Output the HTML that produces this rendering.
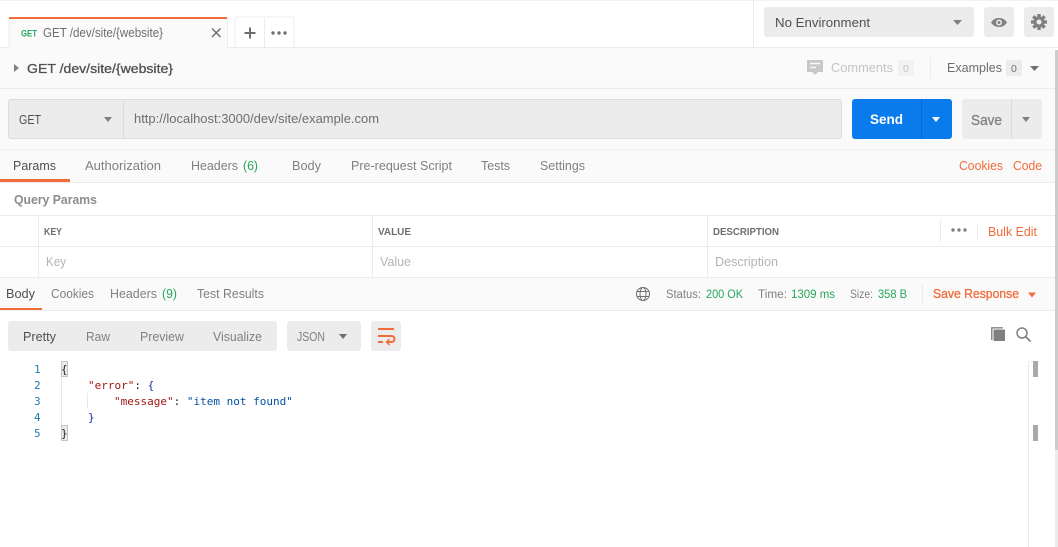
<!DOCTYPE html>
<html><head><meta charset="utf-8">
<style>
html,body{margin:0;padding:0;background:#fff;width:1058px;height:547px;overflow:hidden}
svg{display:block}
text{font-family:"Liberation Sans",sans-serif;font-size:12.5px;fill:#808080}
.m{font-family:"DejaVu Sans Mono","Liberation Mono",monospace;font-size:11px}
.d{fill:#505050}.o{fill:#f26b3a}.g{fill:#26a65b}.l{fill:#b3b3b3}.h{fill:#6e6e6e}
.st{stroke:#505050;stroke-width:.3px}.so{stroke:#f26b3a;stroke-width:.3px}.sh{stroke:#808080;stroke-width:.3px}
</style></head><body>
<svg width="1058" height="547" viewBox="0 0 1058 547" xmlns="http://www.w3.org/2000/svg">
<rect width="1058" height="547" fill="#fff"/>
<rect width="1058" height="1" fill="#f2f2f2"/>
<!-- panels -->
<rect x="0" y="48" width="1055" height="134" fill="#fafafa"/>
<rect x="0" y="47" width="1058" height="1" fill="#ececec"/>
<rect x="0" y="88" width="1055" height="1" fill="#ececec"/>
<rect x="0" y="149" width="1055" height="1" fill="#f0f0f0"/>
<rect x="0" y="182" width="1055" height="1" fill="#ececec"/>
<rect x="0" y="215" width="1055" height="1" fill="#ececec"/>
<rect x="0" y="246" width="1055" height="1" fill="#ececec"/>
<rect x="0" y="277" width="1055" height="1" fill="#ececec"/>
<rect x="0" y="278" width="1055" height="32" fill="#fafafa"/>
<rect x="0" y="310" width="1055" height="1" fill="#ececec"/>
<!-- tab -->
<rect x="9" y="18" width="218" height="30" fill="#fafafa"/>
<rect x="8.500" y="18" width="1" height="29" fill="#ececec"/>
<rect x="227" y="18" width="1" height="29" fill="#ececec"/>
<rect x="9" y="17" width="218" height="2" fill="#f26b3a"/>
<text x="21" y="36.500" style="font-size:9.500px;font-weight:bold" class="g" textLength="16" lengthAdjust="spacingAndGlyphs">GET</text>
<text x="43" y="37" class="h" textLength="120" lengthAdjust="spacingAndGlyphs">GET /dev/site/{website}</text>
<path d="M212 28.500l8.500 8.500M220.500 28.500l-8.500 8.500" stroke="#707070" stroke-width="1.500" fill="none"/>
<path d="M235 47V19a2 2 0 0 1 2-2H292a2 2 0 0 1 2 2V47" fill="#fff" stroke="#ececec"/>
<rect x="264" y="18" width="1" height="29" fill="#ececec"/>
<path d="M250 27.500v11M244.500 33h11" stroke="#6e6e6e" stroke-width="2" fill="none"/>
<circle cx="273" cy="33" r="1.700" fill="#707070"/><circle cx="279" cy="33" r="1.700" fill="#707070"/><circle cx="285" cy="33" r="1.700" fill="#707070"/>
<!-- env -->
<rect x="753" y="0" width="1" height="47" fill="#ececec"/>
<rect x="764" y="7" width="210" height="30" rx="3" fill="#ececec"/>
<text x="775" y="27" class="d" textLength="95" lengthAdjust="spacingAndGlyphs">No Environment</text>
<path d="M953 20h9l-4.500 5z" fill="#808080"/>
<rect x="984" y="7" width="30" height="30" rx="3" fill="#ececec"/>
<path d="M991 22.500c2-3 4.500-4.500 8-4.500s6 1.500 8 4.500c-2 3-4.500 4.500-8 4.500s-6-1.500-8-4.500z" fill="#808080"/>
<circle cx="999" cy="22.500" r="3" fill="#ececec"/><circle cx="999" cy="22.500" r="1.500" fill="#808080"/>
<rect x="1024" y="7" width="30" height="30" rx="3" fill="#ececec"/>
<g fill="#808080">
<circle cx="1039" cy="22" r="5.600"/>
<rect x="1037.300" y="14" width="3.400" height="16"/>
<rect x="1037.300" y="14" width="3.400" height="16" transform="rotate(45 1039 22)"/>
<rect x="1037.300" y="14" width="3.400" height="16" transform="rotate(90 1039 22)"/>
<rect x="1037.300" y="14" width="3.400" height="16" transform="rotate(135 1039 22)"/>
</g>
<circle cx="1039" cy="22" r="2.500" fill="#ececec"/>
<!-- title row -->
<path d="M14 64l5 4-5 4z" fill="#808080"/>
<text x="27" y="73" class="d st" style="font-size:13px" textLength="146" lengthAdjust="spacingAndGlyphs">GET /dev/site/{website}</text>
<path d="M807 60h16v12h-5l-3 3-3-3h-5z" fill="#c8c8c8"/>
<path d="M810 63.500h10M810 67.500h6" stroke="#fafafa" stroke-width="1.500"/>
<text x="831" y="72" style="fill:#c4c4c4" textLength="62" lengthAdjust="spacingAndGlyphs">Comments</text>
<rect x="898" y="60" width="16" height="16" rx="2" fill="#f2f2f2"/>
<text x="903" y="72" style="font-size:10.500px;fill:#c4c4c4">0</text>
<rect x="930" y="58" width="1" height="20" fill="#ececec"/>
<text x="947" y="72" class="h" textLength="55" lengthAdjust="spacingAndGlyphs">Examples</text>
<rect x="1006" y="60" width="16" height="16" rx="2" fill="#ececec"/>
<text x="1011" y="72" style="font-size:10.500px" class="h">0</text>
<path d="M1030 66h9l-4.500 5z" fill="#707070"/>
<!-- url -->
<rect x="8.500" y="99.500" width="833" height="39" rx="2.500" fill="#ececec" stroke="#dcdcdc"/>
<rect x="123" y="100" width="1" height="38" fill="#dcdcdc"/>
<text x="19" y="124" class="d" textLength="22" lengthAdjust="spacingAndGlyphs">GET</text>
<path d="M104 117h8l-4 5z" fill="#808080"/>
<text x="134" y="123" class="h" textLength="245" lengthAdjust="spacingAndGlyphs">http://localhost:3000/dev/site/example.com</text>
<rect x="852" y="99" width="100" height="40" rx="3" fill="#097bed"/>
<rect x="921" y="99" width="1" height="40" fill="#0768cc"/>
<text x="870" y="124" style="fill:#fff;font-weight:bold;font-size:14px" textLength="33" lengthAdjust="spacingAndGlyphs">Send</text>
<path d="M932 117h8l-4 5z" fill="#fff"/>
<rect x="962" y="99" width="80" height="40" rx="3" fill="#ececec"/>
<rect x="1011" y="99" width="1" height="40" fill="#dcdcdc"/>
<text x="971" y="125" style="font-size:14.500px" class="sh" textLength="31" lengthAdjust="spacingAndGlyphs">Save</text>
<path d="M1022 117h8l-4 5z" fill="#808080"/>
<!-- req tabs -->
<text x="13" y="170" class="d" textLength="43" lengthAdjust="spacingAndGlyphs">Params</text>
<rect x="0" y="179" width="70" height="3" fill="#f26b3a"/>
<text x="85" y="170" textLength="76" lengthAdjust="spacingAndGlyphs">Authorization</text>
<text x="191" y="170" textLength="47" lengthAdjust="spacingAndGlyphs">Headers</text>
<text x="243" y="170" class="g" textLength="15" lengthAdjust="spacingAndGlyphs">(6)</text>
<text x="292" y="170" textLength="29" lengthAdjust="spacingAndGlyphs">Body</text>
<text x="351" y="170" textLength="101" lengthAdjust="spacingAndGlyphs">Pre-request Script</text>
<text x="481" y="170" textLength="29" lengthAdjust="spacingAndGlyphs">Tests</text>
<text x="540" y="170" textLength="45" lengthAdjust="spacingAndGlyphs">Settings</text>
<text x="959" y="170" class="o" textLength="44" lengthAdjust="spacingAndGlyphs">Cookies</text>
<text x="1013" y="170" class="o" textLength="29" lengthAdjust="spacingAndGlyphs">Code</text>
<text x="14" y="204" style="font-weight:bold;fill:#8c8c8c" textLength="83" lengthAdjust="spacingAndGlyphs">Query Params</text>
<!-- table -->
<rect x="38" y="216" width="1" height="61" fill="#ececec"/>
<rect x="372" y="216" width="1" height="61" fill="#ececec"/>
<rect x="707" y="216" width="1" height="61" fill="#ececec"/>
<rect x="940" y="220" width="1" height="22" fill="#ececec"/>
<rect x="977" y="223" width="1" height="17" fill="#ececec"/>
<text x="44" y="235" style="font-size:10px;font-weight:bold" class="h" textLength="18" lengthAdjust="spacingAndGlyphs">KEY</text>
<text x="378" y="235" style="font-size:10px;font-weight:bold" class="h" textLength="33" lengthAdjust="spacingAndGlyphs">VALUE</text>
<text x="713" y="235" style="font-size:10px;font-weight:bold" class="h" textLength="66" lengthAdjust="spacingAndGlyphs">DESCRIPTION</text>
<circle cx="953" cy="230" r="1.700" fill="#808080"/><circle cx="959" cy="230" r="1.700" fill="#808080"/><circle cx="965" cy="230" r="1.700" fill="#808080"/>
<text x="988" y="236" class="o" textLength="49" lengthAdjust="spacingAndGlyphs">Bulk Edit</text>
<text x="46" y="266" class="l" textLength="20" lengthAdjust="spacingAndGlyphs">Key</text>
<text x="380" y="266" class="l" textLength="31" lengthAdjust="spacingAndGlyphs">Value</text>
<text x="715" y="266" class="l" textLength="63" lengthAdjust="spacingAndGlyphs">Description</text>
<!-- res tabs -->
<text x="6" y="298" class="d" textLength="29" lengthAdjust="spacingAndGlyphs">Body</text>
<rect x="0" y="308" width="42" height="2" fill="#f26b3a"/>
<text x="51" y="298" textLength="43" lengthAdjust="spacingAndGlyphs">Cookies</text>
<text x="110" y="298" textLength="47" lengthAdjust="spacingAndGlyphs">Headers</text>
<text x="162" y="298" class="g" textLength="15" lengthAdjust="spacingAndGlyphs">(9)</text>
<text x="197" y="298" textLength="67" lengthAdjust="spacingAndGlyphs">Test Results</text>
<g fill="none" stroke="#707070" stroke-width="1"><circle cx="643" cy="294" r="6.500"/><ellipse cx="643" cy="294" rx="3" ry="6.500"/><path d="M637 291.500h12M637 296.500h12"/></g>
<text x="666" y="298" style="font-size:11.500px" textLength="35" lengthAdjust="spacingAndGlyphs">Status:</text>
<text x="706" y="298" style="font-size:11.500px" class="g" textLength="37" lengthAdjust="spacingAndGlyphs">200 OK</text>
<text x="758" y="298" style="font-size:11.500px" textLength="29" lengthAdjust="spacingAndGlyphs">Time:</text>
<text x="791" y="298" style="font-size:11.500px" class="g" textLength="44" lengthAdjust="spacingAndGlyphs">1309 ms</text>
<text x="850" y="298" style="font-size:12px" textLength="23" lengthAdjust="spacingAndGlyphs">Size:</text>
<text x="878" y="298" style="font-size:11.500px" class="g" textLength="29" lengthAdjust="spacingAndGlyphs">358 B</text>
<rect x="922" y="284" width="1" height="20" fill="#ececec"/>
<text x="933" y="298" class="o so" textLength="86" lengthAdjust="spacingAndGlyphs">Save Response</text>
<path d="M1028 292.500h8l-4 5z" fill="#f26b3a"/>
<!-- toolbar -->
<rect x="8" y="321" width="269" height="30" rx="3" fill="#ececec"/>
<text x="23" y="341" class="d" textLength="33" lengthAdjust="spacingAndGlyphs">Pretty</text>
<text x="86" y="341" textLength="24" lengthAdjust="spacingAndGlyphs">Raw</text>
<text x="140" y="341" textLength="44" lengthAdjust="spacingAndGlyphs">Preview</text>
<text x="213" y="341" textLength="49" lengthAdjust="spacingAndGlyphs">Visualize</text>
<rect x="287" y="321" width="74" height="30" rx="3" fill="#ececec"/>
<text x="297" y="341" style="font-size:13px" textLength="28" lengthAdjust="spacingAndGlyphs">JSON</text>
<path d="M339 334h8l-4 5z" fill="#707070"/>
<rect x="371" y="321" width="30" height="30" rx="3" fill="#ececec"/>
<path d="M378 329h16M378 336h13.500a3 3 0 0 1 0 6h-4.500M378 342h5" stroke="#f26b3a" stroke-width="2" fill="none"/>
<path d="M389.500 339l-3 3 3 3" stroke="#f26b3a" stroke-width="1.500" fill="none"/>
<!-- copy / search -->
<path d="M991.800 340v-12.200h11" fill="none" stroke="#808080" stroke-width="1.400"/>
<rect x="993.500" y="329.500" width="11.500" height="11.500" fill="#808080"/>
<circle cx="1022" cy="333" r="5" fill="none" stroke="#808080" stroke-width="1.500"/>
<path d="M1025.500 336.500l5 5" stroke="#808080" stroke-width="1.800"/>
<!-- code -->
<text class="m" x="34" y="373" style="fill:#1a7fa8">1</text>
<text class="m" x="34" y="389" style="fill:#1a7fa8">2</text>
<text class="m" x="34" y="405" style="fill:#1a7fa8">3</text>
<text class="m" x="34" y="421" style="fill:#1a7fa8">4</text>
<text class="m" x="34" y="437" style="fill:#1a7fa8">5</text>
<rect x="61.500" y="361.500" width="6" height="15" fill="#e8ece8" stroke="#c4c4c4"/>
<rect x="61.500" y="425.500" width="6" height="15" fill="#e8ece8" stroke="#c4c4c4"/>
<rect x="61" y="377" width="1" height="48" fill="#e8e8e8"/>
<rect x="87" y="393" width="1" height="16" fill="#e8e8e8"/>
<text class="m" x="61" y="373" style="fill:#1f1f1f">{</text>
<text class="m" x="88" y="389"><tspan style="fill:#a31515">"error"</tspan><tspan style="fill:#222">:</tspan> <tspan style="fill:#0b2fa8">{</tspan></text>
<text class="m" x="114" y="405"><tspan style="fill:#a31515">"message"</tspan><tspan style="fill:#222">:</tspan> <tspan style="fill:#0451a5">"item not found"</tspan></text>
<text class="m" x="88" y="421" style="fill:#0b2fa8">}</text>
<text class="m" x="61" y="437" style="fill:#1f1f1f">}</text>
<!-- scroll -->
<rect x="1028" y="361" width="1" height="186" fill="#ececec"/>
<rect x="1028" y="361" width="11" height="1" fill="#f0f0f0"/>
<rect x="1033" y="361" width="5" height="16" fill="#a9a9a9"/>
<rect x="1033" y="425" width="5" height="16" fill="#a9a9a9"/>
<rect x="1055" y="450" width="3" height="97" fill="#ececec"/>
<rect x="1055" y="50" width="3" height="400" fill="#cdcdcd"/>
</svg>
</body></html>
